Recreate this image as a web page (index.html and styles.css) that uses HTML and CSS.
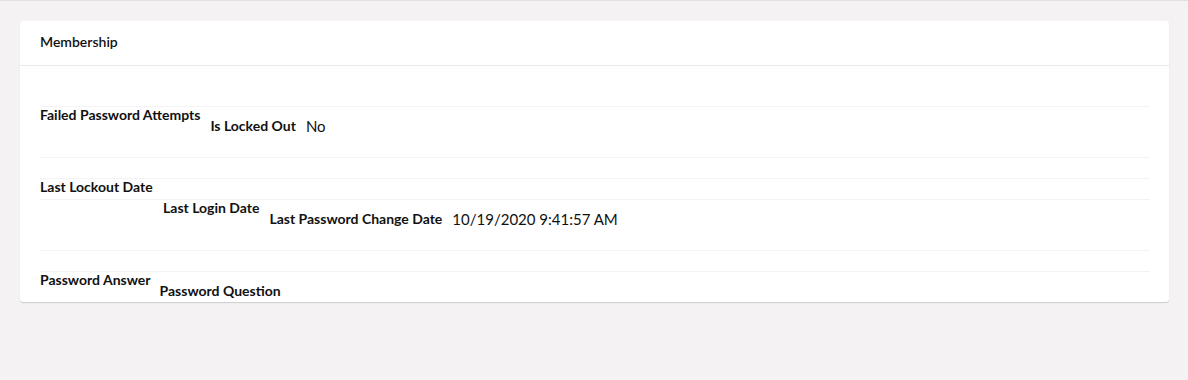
FILE: index.html
```html
<!DOCTYPE html>
<html lang="en">
<head>
    <meta charset="UTF-8">
    <meta name="viewport" content="width=device-width, initial-scale=1.0">
    <title>Membership</title>
    <link rel="stylesheet" href="styles.css">
</head>
<body>
    <div class="page">
        <div class="box">
            <div class="box-header">Membership</div>
            <div class="box-content">
                <div class="prop-row tall">
                    <span class="label gap">Failed Password Attempts</span>
                    <div class="stepped">
                        <span class="label gap">Is Locked Out</span>
                        <span class="value">No</span>
                    </div>
                </div>
                <div class="prop-row"></div>
                <div class="prop-row">
                    <span class="label">Last Lockout Date</span>
                </div>
                <div class="prop-row tall">
                    <span class="label gap indent">Last Login Date</span>
                    <div class="stepped">
                        <span class="label gap">Last Password Change Date</span>
                        <span class="value">10/19/2020 9:41:57 AM</span>
                    </div>
                </div>
                <div class="prop-row"></div>
                <div class="prop-row last">
                    <span class="label gap-sm">Password Answer</span>
                    <div class="stepped">
                        <span class="label">Password Question</span>
                    </div>
                </div>
            </div>
        </div>
    </div>
</body>
</html>
```

FILE: styles.css
```css
body {
    margin: 0;
    padding: 0;
    font-family: Lato, "Open Sans", sans-serif;
    background: #f4f2f2;
    color: #111;
    border-top: 1px solid #e2e0e0;
}

.page {
    padding: 20px 19px 0 20px;
    height: 359px;
}

.box {
    background: #fff;
    border-radius: 3px;
    box-shadow: 0 1px 1px rgba(0, 0, 0, 0.16);
}

.box-header {
    padding: 0 20px;
    height: 44px;
    line-height: 42px;
    font-size: 14px;
    font-weight: 600;
    border-bottom: 1px solid #e9e9eb;
}

.box-content {
    padding: 40px 19px 0 20px;
}

.prop-row {
    display: flex;
    align-items: flex-start;
    border-top: 1px solid #f3f3f5;
    height: 20px;
}

.prop-row.tall {
    height: 50px;
}

.prop-row.last {
    height: 30px;
}

.label {
    font-size: 14px;
    font-weight: 700;
    line-height: 16px;
    white-space: nowrap;
}

.gap {
    margin-right: 10px;
}

.gap-sm {
    margin-right: 9px;
}

.indent {
    margin-left: 123px;
}

.stepped {
    display: flex;
    align-items: flex-start;
    padding-top: 11px;
}

.value {
    font-size: 15px;
    line-height: 16px;
    white-space: nowrap;
}
```
